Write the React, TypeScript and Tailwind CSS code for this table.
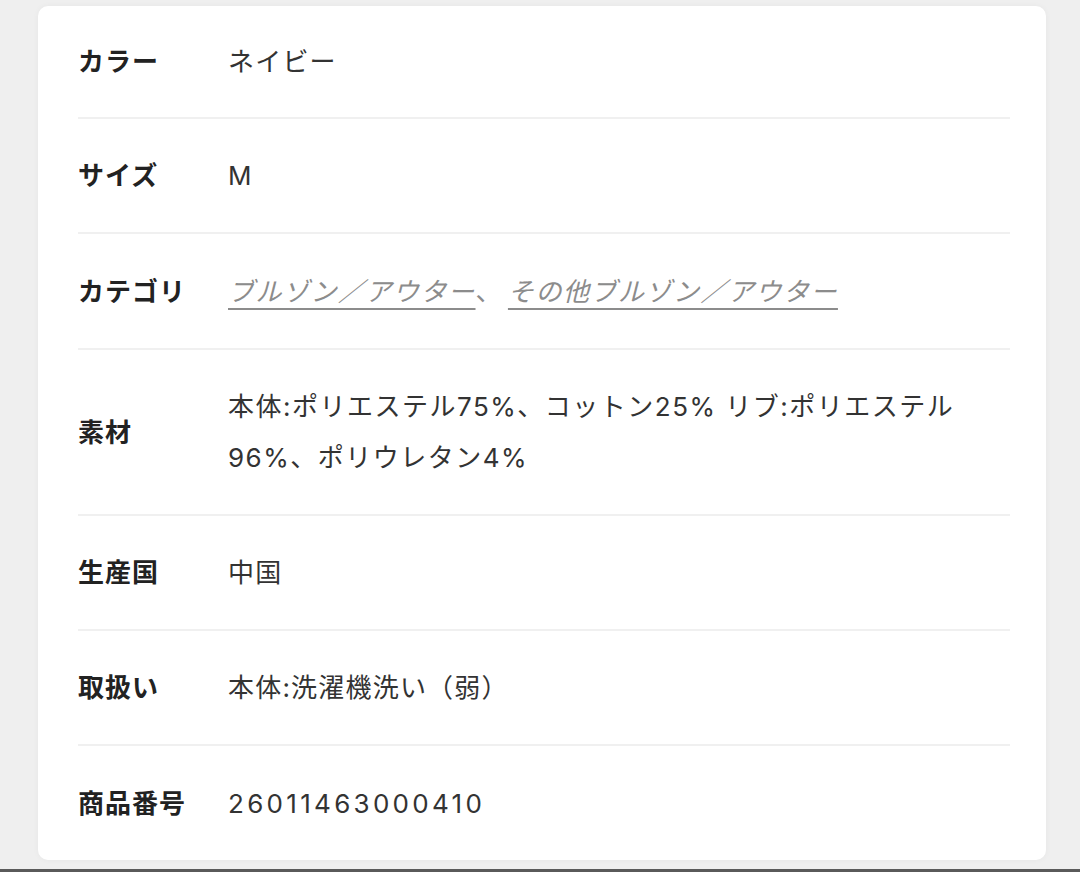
import React from 'react';

type Row = {
  label: string;
  value: React.ReactNode;
  h: string;
};

const font = { fontFamily: 'Inter, "Noto Sans CJK JP", "Noto Sans", sans-serif' };

const Link: React.FC<{ children: React.ReactNode }> = ({ children }) => (
  <span className="italic text-[#8c8c8c] tracking-[1.5px] underline decoration-[#8c8c8c] decoration-[1.5px] underline-offset-[7px]">
    {children}
  </span>
);

const rows: Row[] = [
  { label: 'カラー', value: 'ネイビー', h: 'h-[113px]' },
  { label: 'サイズ', value: 'M', h: 'h-[115px]' },
  {
    label: 'カテゴリ',
    value: (
      <span className="tracking-[0.4px]">
        <Link>ブルゾン／アウター</Link>
        <span className="text-[#8c8c8c] mr-[6px]">、</span>
        <Link>その他ブルゾン／アウター</Link>
      </span>
    ),
    h: 'h-[116px]',
  },
  {
    label: '素材',
    value: (
      <span className="block leading-[51px] tracking-[1.5px]">
        本体:ポリエステル75%、コットン25% リブ:ポリエステル
        <br />
        96%、ポリウレタン4%
      </span>
    ),
    h: 'h-[166px]',
  },
  { label: '生産国', value: '中国', h: 'h-[115px]' },
  { label: '取扱い', value: '本体:洗濯機洗い（弱）', h: 'h-[115px]' },
  { label: '商品番号', value: <span className="tracking-[3.3px]">26011463000410</span>, h: 'h-[114px]' },
];

export default function App() {
  return (
    <div className="w-[1080px] h-[872px] bg-[#efefef] flex flex-col overflow-hidden" style={font}>
      <div className="flex-1 pt-[6px] pl-[38px]">
        <div className="w-[1008px] h-[854px] bg-white rounded-[10px] shadow-[0_0_6px_rgba(0,0,0,0.04)] pl-[40px] pr-[36px]">
          {rows.map((row, i) => (
            <div
              key={row.label}
              className={`flex items-center ${row.h} ${i < rows.length - 1 ? 'border-b-2 border-[#f0f0f0]' : ''}`}
            >
              <div className="w-[150px] shrink-0 text-[26px] font-bold text-[#222] tracking-[1px]">
                {row.label}
              </div>
              <div className="text-[26px] text-[#333] tracking-[1.2px]">{row.value}</div>
            </div>
          ))}
        </div>
      </div>
      <div className="h-[3px] bg-[#5a5a5a]" />
    </div>
  );
}
